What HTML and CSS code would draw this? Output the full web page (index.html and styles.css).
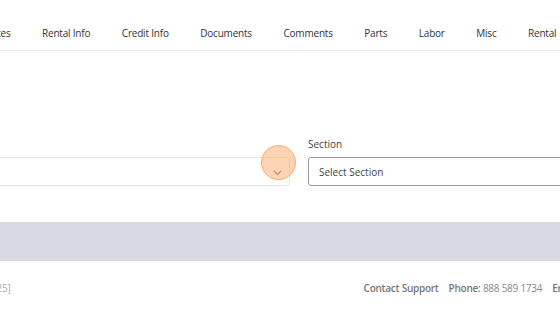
FILE: index.html
```html
<!DOCTYPE html>
<html>
<head>
<meta charset="utf-8">
<link rel="stylesheet" href="styles.css">
</head>
<body>
<nav class="tabs">
  <span class="tab">Notes</span>
  <span class="tab">Rental Info</span>
  <span class="tab">Credit Info</span>
  <span class="tab">Documents</span>
  <span class="tab">Comments</span>
  <span class="tab">Parts</span>
  <span class="tab">Labor</span>
  <span class="tab">Misc</span>
  <span class="tab">Rental</span>
</nav>
<section class="form-row">
  <div class="field field-left">
    <label class="label">Category</label>
    <div class="select select-light">
      <svg class="chev" width="9" height="6" viewBox="0 0 9 6"><path d="M1 1l3.5 3.5L8 1" fill="none" stroke="#8a6a55" stroke-width="1.2"/></svg>
      <span class="highlight"></span>
    </div>
  </div>
  <div class="field field-right">
    <label class="label">Section</label>
    <div class="select select-dark">
      <span class="value">Select Section</span>
    </div>
  </div>
</section>
<div class="band"></div>
<footer class="footer">
  <span class="version">[v1.0.25]</span>
  <span class="contact"><b>Contact Support</b><span class="item"><b>Phone:</b> 888 589 1734</span><span class="item"><b>Email:</b> support@example.com</span></span>
</footer>
</body>
</html>
```
FILE: styles.css
```css
* { box-sizing: border-box; }
html, body { margin: 0; padding: 0; background: #fff; overflow: hidden; }
body { width: 560px; height: 315px; font-family: "Open Sans", "Noto Sans", sans-serif; color: #333; }
.tabs {
  height: 51px;
  border-bottom: 1px solid #ececec;
  display: flex;
  align-items: center;
  gap: 31.5px;
  margin-left: -16px;
  padding-top: 15px;
  font-size: 10px;
  letter-spacing: -0.2px;
  white-space: nowrap;
  color: #333;
}
.tab { flex: none; }
.form-row {
  display: flex;
  gap: 18px;
  margin-top: 87px;
  margin-left: -300px;
}
.field { display: flex; flex-direction: column; gap: 6px; flex: none; }
.field-left { width: 590px; }
.field-right { width: 600px; }
.label { font-size: 10px; color: #444; height: 13px; line-height: 13px; }
.select {
  height: 29px;
  border-radius: 3px;
  display: flex;
  align-items: center;
  padding: 0 10px;
  font-size: 10px;
  position: relative;
}
.select-light { border: 1px solid #e4e4e4; justify-content: flex-end; }
.select-dark { border: 1px solid #9a9a9a; color: #444; }
.chev { position: relative; top: 1px; left: 3px; }
.highlight {
  position: absolute;
  right: -7px;
  top: -13px;
  width: 35px;
  height: 35px;
  border-radius: 50%;
  background: rgba(255, 170, 105, 0.5);
  border: 1.5px solid #ffab6b;
}
.band { height: 39px; background: #d9d9e3; margin-top: 36px; }
.footer {
  display: flex;
  justify-content: space-between;
  align-items: center;
  height: 54px;
  font-size: 10px;
  letter-spacing: -0.25px;
  color: #888;
  white-space: nowrap;
  margin-left: -27px;
  margin-right: -126px;
}
.version { color: #aaa; }
.contact b { color: #777; font-weight: 600; }
.item { margin-left: 10px; }
.item b { font-weight: 600; }
```
